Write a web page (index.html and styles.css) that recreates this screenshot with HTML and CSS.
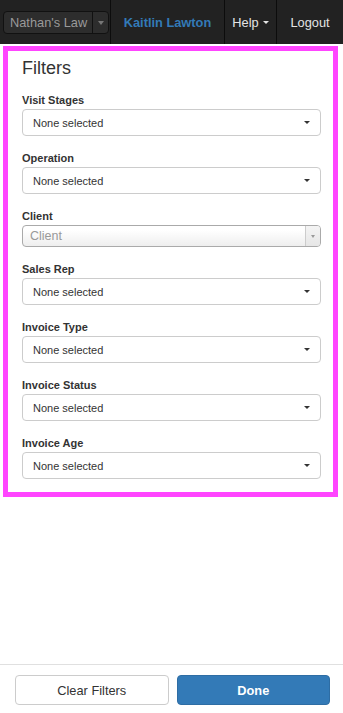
FILE: index.html
```html
<!DOCTYPE html>
<html>
<head>
<meta charset="utf-8">
<link rel="stylesheet" href="styles.css">
</head>
<body>
<div class="page">
  <header class="navbar">
    <div class="nav-cell cell-brand">
      <div class="brand-select">
        <span class="brand-text">Nathan's Law</span>
        <span class="brand-arrow"><span class="tri tri-grey"></span></span>
      </div>
    </div>
    <div class="nav-cell cell-user">Kaitlin Lawton</div>
    <div class="nav-cell cell-help">Help <span class="caret caret-light"></span></div>
    <div class="nav-cell cell-logout">Logout</div>
  </header>

  <section class="panel">
    <h2 class="panel-title">Filters</h2>

    <div class="group">
      <label class="lbl">Visit Stages</label>
      <div class="ms">None selected <span class="caret"></span></div>
    </div>
    <div class="group">
      <label class="lbl">Operation</label>
      <div class="ms">None selected <span class="caret"></span></div>
    </div>
    <div class="group">
      <label class="lbl">Client</label>
      <div class="combo">
        <span class="combo-text">Client</span>
        <span class="combo-arrow"><span class="tri tri-grey"></span></span>
      </div>
    </div>
    <div class="group">
      <label class="lbl">Sales Rep</label>
      <div class="ms">None selected <span class="caret"></span></div>
    </div>
    <div class="group">
      <label class="lbl">Invoice Type</label>
      <div class="ms">None selected <span class="caret"></span></div>
    </div>
    <div class="group">
      <label class="lbl">Invoice Status</label>
      <div class="ms">None selected <span class="caret"></span></div>
    </div>
    <div class="group last">
      <label class="lbl">Invoice Age</label>
      <div class="ms">None selected <span class="caret"></span></div>
    </div>
  </section>

  <div class="spacer"></div>

  <footer class="footer">
    <button class="btn btn-default">Clear Filters</button>
    <button class="btn btn-primary">Done</button>
  </footer>
</div>
</body>
</html>
```

FILE: styles.css
```css
* { box-sizing: border-box; }
html, body { margin: 0; padding: 0; }
body {
  font-family: "Liberation Sans", Arial, sans-serif;
  color: #333;
  background: #fff;
}
.page {
  height: 713px;
  display: flex;
  flex-direction: column;
}

/* navbar */
.navbar {
  height: 44px;
  background: #222;
  display: flex;
  flex: none;
}
.nav-cell {
  height: 44px;
  display: flex;
  align-items: center;
  justify-content: center;
  font-size: 12.8px;
  color: #e4e4e4;
  border-left: 1px solid #0c0c0c;
}
.cell-brand { width: 110px; border-left: none; justify-content: flex-start; padding-left: 3px; }
.cell-user { width: 114px; color: #337ab7; font-weight: bold; }
.cell-help { width: 52px; }
.cell-logout { width: 67px; }

.brand-select {
  width: 106px;
  height: 23px;
  margin-top: 1px;
  border: 1px solid #111;
  border-radius: 4px;
  background: #2d2d2d;
  display: flex;
  align-items: stretch;
}
.brand-text {
  flex: 1;
  display: flex;
  align-items: center;
  padding-left: 6px;
  color: #9a9a9a;
  font-size: 12.8px;
}
.brand-arrow {
  width: 16px;
  border-left: 1px solid #111;
  display: flex;
  align-items: center;
  justify-content: center;
}
.tri {
  display: inline-block;
  width: 0; height: 0;
  border-left: 3px solid transparent;
  border-right: 3px solid transparent;
  border-top: 4px solid #777;
}
.tri-grey { border-top-color: #777; }

.caret {
  display: inline-block;
  width: 0; height: 0;
  border-left: 3.5px solid transparent;
  border-right: 3.5px solid transparent;
  border-top: 3.5px solid #333;
}
.caret-light { border-top-color: #e4e4e4; margin-left: 4px; }

/* panel */
.panel {
  width: 335px;
  margin: 2px 0 0 3px;
  border: 5px solid #ff45ff;
  padding: 7px 12px 13px 14px;
  flex: none;
}
.panel-title {
  margin: 0 0 15px 0;
  font-size: 18px;
  font-weight: normal;
  line-height: 20px;
  color: #333;
}
.group { margin-bottom: 15px; }
.group.last { margin-bottom: 0; }
.lbl {
  display: block;
  font-size: 11px;
  font-weight: bold;
  line-height: 14px;
  margin-bottom: 2px;
  color: #333;
}
.ms {
  height: 27px;
  border: 1px solid #ccc;
  border-radius: 4px;
  padding: 0 10px;
  display: flex;
  align-items: center;
  justify-content: space-between;
  font-size: 11px;
  color: #333;
  background: #fff;
}
.combo {
  height: 22px;
  border: 1px solid #aaa;
  border-radius: 4px;
  background: linear-gradient(#fff 20%, #eee 100%);
  display: flex;
  align-items: stretch;
}
.combo-text {
  flex: 1;
  display: flex;
  align-items: center;
  padding-left: 7px;
  font-size: 12.5px;
  color: #999;
}
.combo-arrow {
  width: 15px;
  border-left: 1px solid #ccc;
  background: linear-gradient(#f4f4f4, #e6e6e6);
  border-radius: 0 3px 3px 0;
  display: flex;
  align-items: center;
  justify-content: center;
}
.combo-arrow .tri { border-left-width: 2.5px; border-right-width: 2.5px; border-top: 3px solid #999; }

.spacer { flex: 1; }

/* footer */
.footer {
  flex: none;
  border-top: 1px solid #e0e0e0;
  padding: 10px 13px 8px 15px;
  display: grid;
  grid-template-columns: 1fr 1fr;
  column-gap: 8px;
}
.btn {
  height: 30px;
  border-radius: 4px;
  font-family: "Liberation Sans", Arial, sans-serif;
  font-size: 12.8px;
  padding: 0;
  margin: 0;
}
.btn-default {
  background: #fff;
  border: 1px solid #ccc;
  color: #333;
}
.btn-primary {
  background: #337ab7;
  border: 1px solid #2e6da4;
  color: #fff;
  font-weight: bold;
}
```
